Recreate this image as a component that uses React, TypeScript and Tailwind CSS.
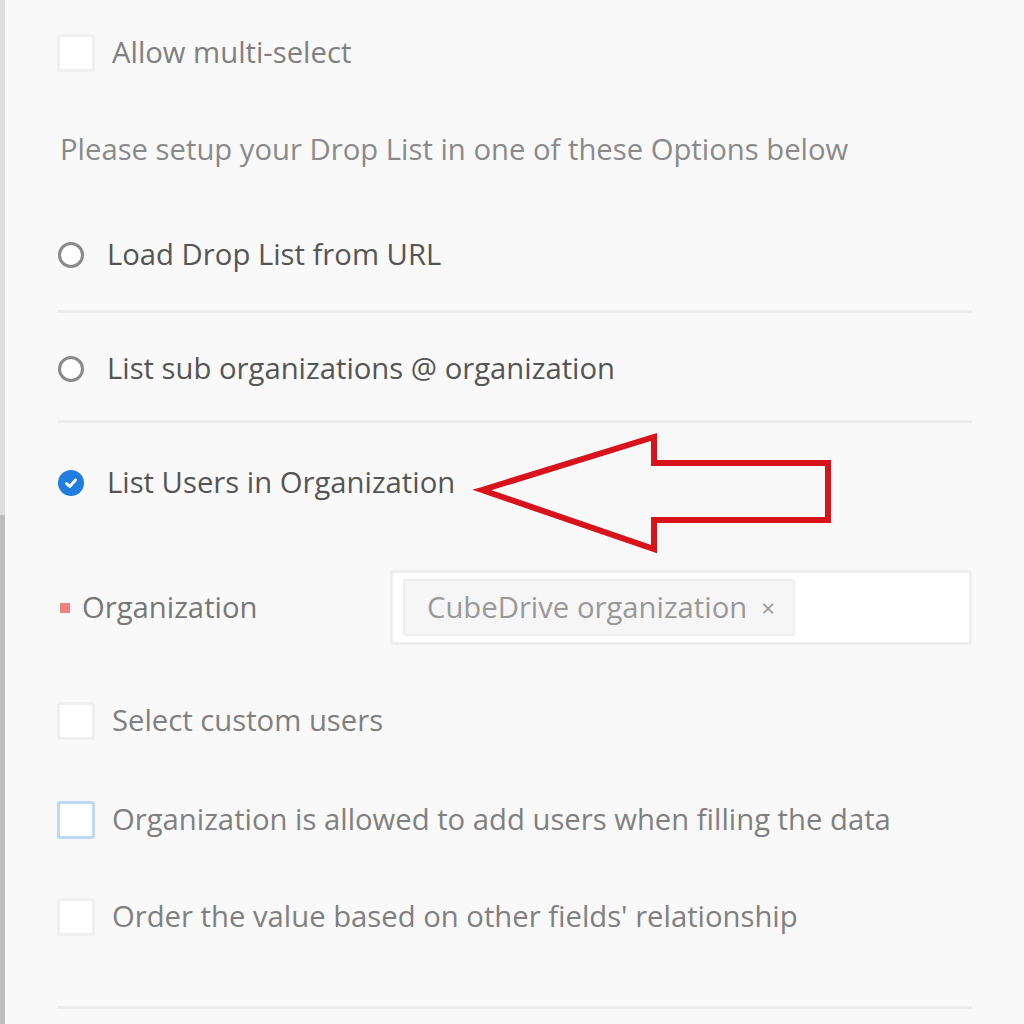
import React from "react";

const Checkbox = ({ focused }: { focused?: boolean }) => (
  <span
    className={
      focused
        ? "w-[38px] h-[38px] shrink-0 rounded-[3px] bg-white border-[3px] border-[#bcd8f5]"
        : "w-[38px] h-[38px] shrink-0 rounded-[3px] bg-white border-[3px] border-[#efefef]"
    }
  />
);

const Radio = ({ checked }: { checked?: boolean }) =>
  checked ? (
    <span className="w-[26px] h-[26px] shrink-0 rounded-full bg-[#1f7ee0] flex items-center justify-center">
      <svg width="16" height="16" viewBox="0 0 16 16">
        <path d="M3.5 8.5 L6.8 11.5 L12.5 5" fill="none" stroke="white" strokeWidth="3" strokeLinecap="round" strokeLinejoin="round" />
      </svg>
    </span>
  ) : (
    <span className="w-[26px] h-[26px] shrink-0 rounded-full bg-white border-[3px] border-[#8a8a8a]" />
  );

const Divider = () => <div className="h-[3px] bg-[#ececec]" />;

export default function App() {
  return (
    <div className="relative flex w-[1024px] h-[1024px] overflow-hidden bg-[#f9f9f9] font-['Open_Sans','Liberation_Sans',sans-serif] text-[29.25px]">
      <div className="flex flex-col w-[5px] shrink-0">
        <div className="h-[515px] bg-[#dedede]" />
        <div className="flex-1 bg-[#bdbdbd]" />
      </div>

      <div className="flex flex-col w-[915px] ml-[52px] pt-[34px]">
        <div className="flex items-center h-[38px] gap-[17px] text-[#808080]">
          <Checkbox />
          <span>Allow multi-select</span>
        </div>

        <div className="flex items-center h-[38px] mt-[59px] pl-[3px] text-[#8a8a8a]">
          Please setup your Drop List in one of these Options below
        </div>

        <div className="flex items-center h-[38px] mt-[67px] pl-[1px] gap-[23px] text-[#555]">
          <Radio />
          <span>Load Drop List from URL</span>
        </div>
        <div className="mt-[36px]">
          <Divider />
        </div>

        <div className="flex items-center h-[38px] mt-[37px] pl-[1px] gap-[23px] text-[#555]">
          <Radio />
          <span>List sub organizations @ organization</span>
        </div>
        <div className="mt-[32px]">
          <Divider />
        </div>

        <div className="flex items-center h-[38px] mt-[41px] pl-[1px] gap-[23px] text-[#555]">
          <Radio checked />
          <span>List Users in Organization</span>
        </div>

        <div className="flex items-center h-[75px] mt-[68px]">
          <div className="flex items-center w-[333px] shrink-0 pl-[3px] gap-[12px] text-[#777]">
            <span className="w-[10px] h-[10px] bg-[#ef8080]" />
            <span>Organization</span>
          </div>
          <div className="flex items-center h-full flex-1 bg-white border-[3px] border-[#eeeeee] rounded-[3px] pl-[10px]">
            <div className="flex items-center h-[57px] w-[392px] bg-[#f6f6f6] border-[2px] border-[#eeeeee] rounded-[3px] pl-[22px] gap-[14px] text-[#999]">
              <span>CubeDrive organization</span>
              <span className="text-[24px] text-[#999]">×</span>
            </div>
          </div>
        </div>

        <div className="flex items-center h-[38px] mt-[57px] gap-[17px] text-[#808080]">
          <Checkbox />
          <span>Select custom users</span>
        </div>

        <div className="flex items-center h-[38px] mt-[61px] gap-[17px] text-[#808080]">
          <Checkbox focused />
          <span>Organization is allowed to add users when filling the data</span>
        </div>

        <div className="flex items-center h-[38px] mt-[59px] gap-[17px] text-[#808080]">
          <Checkbox />
          <span>Order the value based on other fields' relationship</span>
        </div>

        <div className="mt-[70px]">
          <Divider />
        </div>
      </div>

      <svg className="absolute left-0 top-0" width="1024" height="1024" viewBox="0 0 1024 1024">
        <polygon
          points="482,490 654,437 654,463 828,463 828,520 654,520 654,549"
          fill="none"
          stroke="#d8131b"
          strokeWidth="6"
          strokeLinejoin="miter"
        />
      </svg>
    </div>
  );
}
